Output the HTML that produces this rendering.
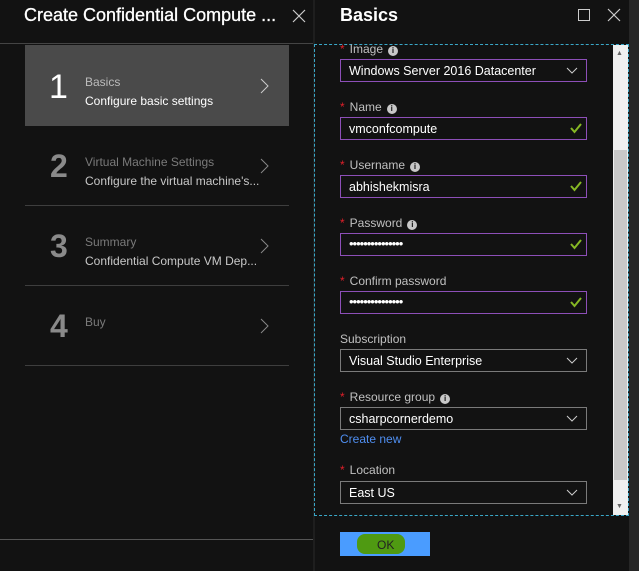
<!DOCTYPE html><html><head><style>
*{margin:0;padding:0;box-sizing:border-box}
body{width:639px;height:571px;background:#121212;position:relative;overflow:hidden;font-family:"Liberation Sans",sans-serif;color:#fff}
.a{position:absolute}
.lbl{position:absolute;left:340px;font-size:12px;color:#c0c0c0}
.lbl .s{color:#e0202a;margin-right:5px}
.i{display:inline-block;width:10px;height:10px;border-radius:50%;background:#c8c8c8;color:#111;font-size:8px;font-weight:bold;text-align:center;line-height:10px;margin-left:5px;vertical-align:0px}
.f{position:absolute;left:340px;width:247px;height:23px;border:1px solid #8d4fb8;font-size:12.5px;padding:4px 8px;color:#fff}
.g{border-color:#7a7a7a}
.ck{position:absolute;right:4px;top:4px;width:12px;height:12px}
.dd{position:absolute;right:8px;top:7px;width:12px;height:8px}
.t1{position:absolute;font-size:12px;color:#7a7a7a}
.t2{position:absolute;font-size:12px;color:#c8c8c8}
.chev{position:absolute;width:10px;height:16px}
.hr{position:absolute;left:25px;width:264px;height:1px;background:#3e3e3e}
.pw{font-size:13px;padding-top:2px;letter-spacing:-1px}
</style></head><body>
<div class="a" style="left:24px;top:5px;font-size:18px;color:#fff;-webkit-text-stroke:0.3px #fff">Create Confidential Compute ...</div>
<svg class="a" style="left:292px;top:9px" width="14" height="14"><path d="M1 1L13 13M13 1L1 13" stroke="#ccc" stroke-width="1.2"/></svg>
<div class="a" style="left:0;top:43px;width:313px;height:1px;background:#444"></div>
<div class="a" style="left:313px;top:0;width:2px;height:571px;background:#1e1e1e"></div>
<div class="a" style="left:25px;top:45px;width:264px;height:81px;background:#4a4a4a"></div>
<div class="a" style="left:49px;top:68px;font-size:34px;color:#fff">1</div>
<div class="t1" style="left:85px;top:75px;color:#bbb">Basics</div>
<div class="t2" style="left:85px;top:94px;color:#fff">Configure basic settings</div>
<svg class="chev" style="left:260px;top:78px"><path d="M1 1L8 8L1 15" stroke="#ccc" fill="none"/></svg>
<div class="a" style="left:50px;top:148px;font-size:32px;font-weight:bold;color:#8a8a8a">2</div>
<div class="t1" style="left:85px;top:155px">Virtual Machine Settings</div>
<div class="t2" style="left:85px;top:174px">Configure the virtual machine's...</div>
<svg class="chev" style="left:260px;top:158px"><path d="M1 1L8 8L1 15" stroke="#888" fill="none"/></svg>
<div class="hr" style="top:205px"></div>
<div class="a" style="left:50px;top:228px;font-size:32px;font-weight:bold;color:#8a8a8a">3</div>
<div class="t1" style="left:85px;top:235px">Summary</div>
<div class="t2" style="left:85px;top:254px">Confidential Compute VM Dep...</div>
<svg class="chev" style="left:260px;top:238px"><path d="M1 1L8 8L1 15" stroke="#888" fill="none"/></svg>
<div class="hr" style="top:285px"></div>
<div class="a" style="left:50px;top:308px;font-size:32px;font-weight:bold;color:#8a8a8a">4</div>
<div class="t1" style="left:85px;top:315px">Buy</div>
<svg class="chev" style="left:260px;top:318px"><path d="M1 1L8 8L1 15" stroke="#888" fill="none"/></svg>
<div class="hr" style="top:365px"></div>
<div class="a" style="left:0;top:539px;width:313px;height:1px;background:#555"></div>

<div class="a" style="left:340px;top:5px;font-size:18px;font-weight:bold">Basics</div>
<div class="a" style="left:578px;top:9px;width:12px;height:12px;border:1px solid #ccc"></div>
<svg class="a" style="left:607px;top:8px" width="14" height="14"><path d="M1 1L13 13M13 1L1 13" stroke="#ccc" stroke-width="1.2"/></svg>
<div class="a" style="left:314px;top:44px;width:315px;height:472px;border:1px dashed #3aa8c8"></div>
<div class="a" style="left:613px;top:45px;width:15px;height:470px;background:#f0f0f0"></div>
<div class="a" style="left:614px;top:150px;width:13px;height:330px;background:#c8c8c8"></div>
<div class="a" style="left:616px;top:50px;color:#666;font-size:7px">▲</div>
<div class="a" style="left:616px;top:503px;color:#666;font-size:7px">▼</div>
<div class="a" style="left:629px;top:0;width:10px;height:571px;background:#262626"></div>

<div class="lbl" style="top:42px"><span class="s">*</span>Image<span class="i">i</span></div>
<div class="f" style="top:59px">Windows Server 2016 Datacenter<svg class="dd"><path d="M1 1L6 6L11 1" stroke="#ccc" fill="none"/></svg></div>
<div class="lbl" style="top:100px"><span class="s">*</span>Name<span class="i">i</span></div>
<div class="f" style="top:117px">vmconfcompute<svg class="ck"><path d="M1 6L4.5 10L11 2" stroke="#86b824" stroke-width="2" fill="none"/></svg></div>
<div class="lbl" style="top:158px"><span class="s">*</span>Username<span class="i">i</span></div>
<div class="f" style="top:175px">abhishekmisra<svg class="ck"><path d="M1 6L4.5 10L11 2" stroke="#86b824" stroke-width="2" fill="none"/></svg></div>
<div class="lbl" style="top:216px"><span class="s">*</span>Password<span class="i">i</span></div>
<div class="f pw" style="top:233px">•••••••••••••••<svg class="ck"><path d="M1 6L4.5 10L11 2" stroke="#86b824" stroke-width="2" fill="none"/></svg></div>
<div class="lbl" style="top:274px"><span class="s">*</span>Confirm password</div>
<div class="f pw" style="top:291px">•••••••••••••••<svg class="ck"><path d="M1 6L4.5 10L11 2" stroke="#86b824" stroke-width="2" fill="none"/></svg></div>
<div class="lbl" style="top:332px">Subscription</div>
<div class="f g" style="top:349px">Visual Studio Enterprise<svg class="dd"><path d="M1 1L6 6L11 1" stroke="#ccc" fill="none"/></svg></div>
<div class="lbl" style="top:390px"><span class="s">*</span>Resource group<span class="i">i</span></div>
<div class="f g" style="top:407px">csharpcornerdemo<svg class="dd"><path d="M1 1L6 6L11 1" stroke="#ccc" fill="none"/></svg></div>
<div class="lbl" style="top:432px;color:#4f8ef0">Create new</div>
<div class="lbl" style="top:463px"><span class="s">*</span>Location</div>
<div class="f g" style="top:481px">East US<svg class="dd"><path d="M1 1L6 6L11 1" stroke="#ccc" fill="none"/></svg></div>

<div class="a" style="left:340px;top:532px;width:90px;height:24px;background:#4a9cff"></div>
<div class="a" style="left:357px;top:534px;width:48px;height:20px;background:#4f9a12;border-radius:8px"></div>
<div class="a" style="left:377px;top:538px;font-size:12px;color:#222">OK</div>
</body></html>
